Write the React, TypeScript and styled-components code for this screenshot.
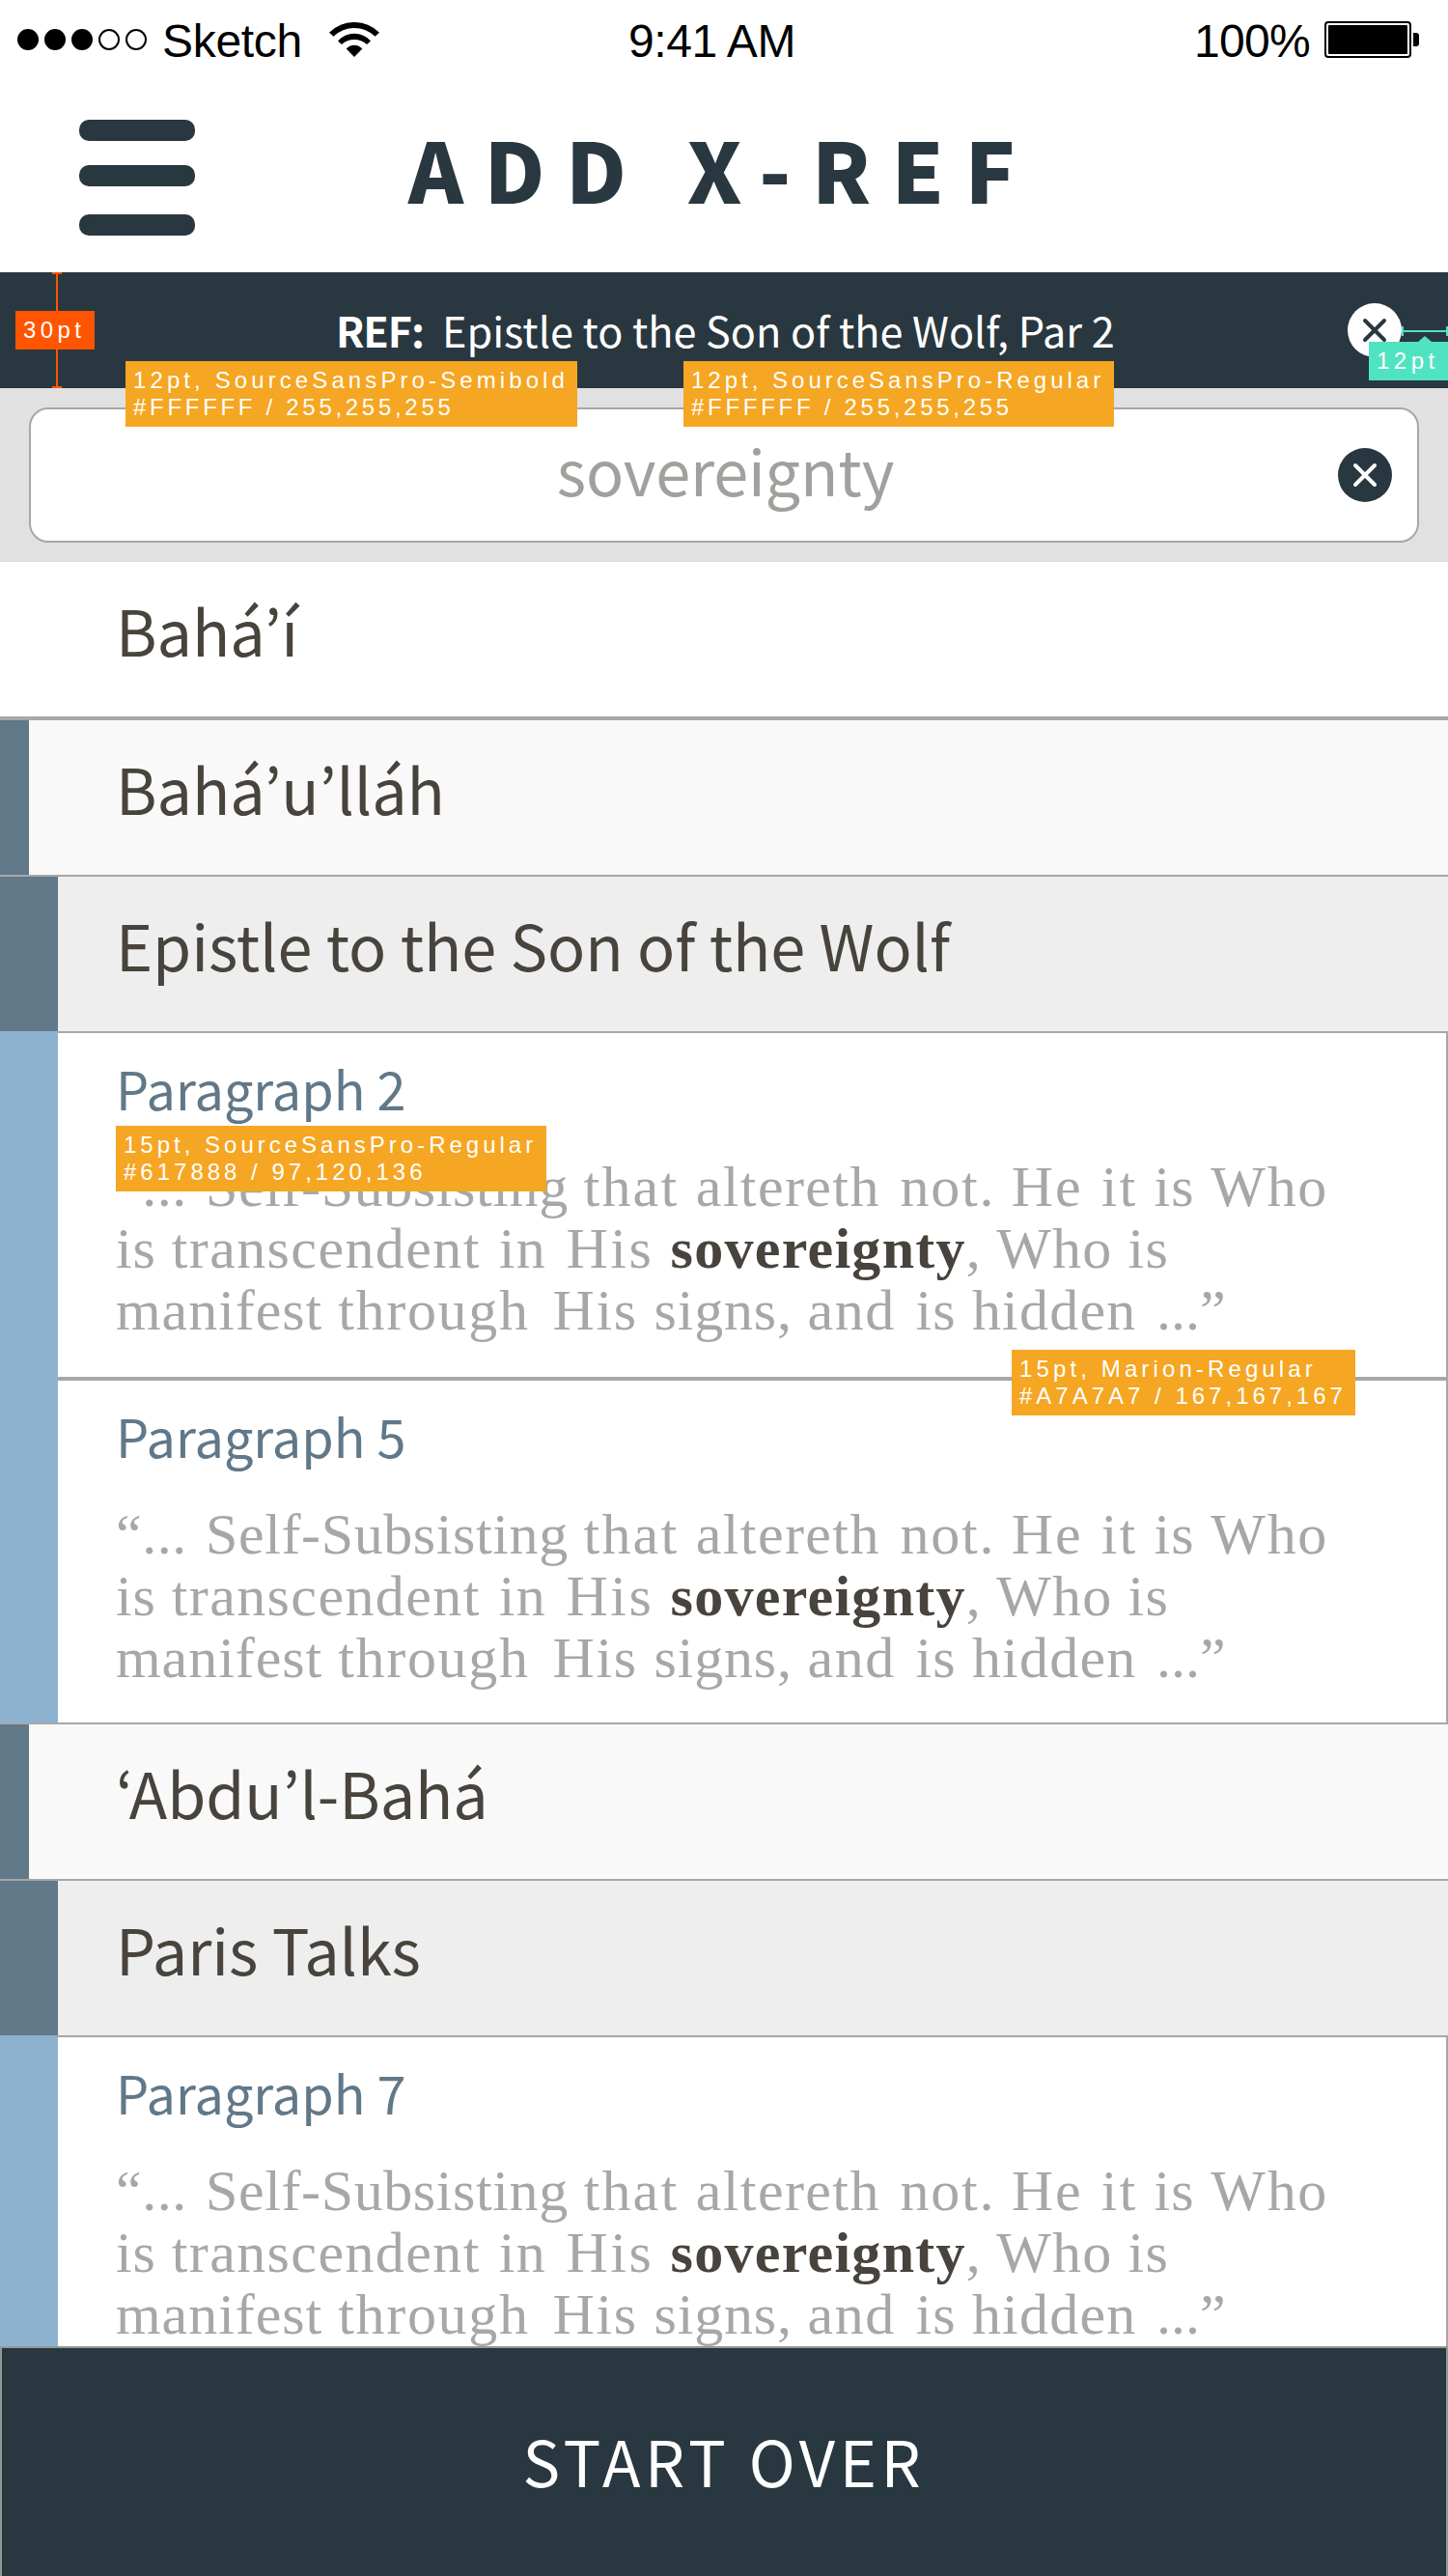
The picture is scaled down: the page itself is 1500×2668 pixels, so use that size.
import React from "react";
import styled, { createGlobalStyle } from "styled-components";

const sans = '"Noto Sans CJK KR", "Open Sans", sans-serif';
const system = '"Liberation Sans", Arial, sans-serif';
const serif = '"Liberation Serif", "Times New Roman", serif';

const ink = "#293740";
const slate = "#617888";
const sky = "#8cb2d0";
const rule = "#a7a7a7";
const charcoal = "#48443d";

const GlobalStyle = createGlobalStyle`
  * { box-sizing: border-box; }
  body { margin: 0; background: #fff; }
`;

const Screen = styled.main`
  position: relative;
  display: flex;
  flex-direction: column;
  width: 1500px;
  height: 2668px;
  overflow: hidden;
  background: #fff;
  font-family: ${sans};
`;

/* Status bar */

const StatusBar = styled.div`
  display: grid;
  grid-template-columns: 633px 1fr auto;
  align-items: center;
  flex: none;
  height: 82px;
  padding: 0 30px 0 18px;
  font: 400 48px/79px ${system};
  color: #000;
`;

const StatusGroup = styled.div`
  display: flex;
  align-items: center;
`;

const SignalDots = styled.div`
  display: flex;
  gap: 6px;
  margin-right: 16px;
`;

const Dot = styled.span<{ $filled: boolean }>`
  width: 22px;
  height: 22px;
  border: 2px solid #000;
  border-radius: 50%;
  background: ${(p) => (p.$filled ? "#000" : "transparent")};
`;

const StatusText = styled.span<{ $track: number }>`
  padding-top: 3px;
  letter-spacing: ${(p) => p.$track}px;
`;

const WifiSvg = styled.svg`
  margin-left: 28px;
`;

const Battery = styled.svg`
  margin-left: 15px;
`;

/* Title bar */

const TitleBar = styled.header`
  display: flex;
  flex: none;
  height: 200px;
  padding-left: 82px;
`;

const MenuButton = styled.button`
  width: 120px;
  height: 120px;
  margin-top: 42px;
  padding: 0;
  border: 0;
  background: none;
`;

const Title = styled.h1`
  margin: 0 0 0 221px;
  font-size: 86.4px;
  font-weight: 900;
  line-height: 183px;
  letter-spacing: 21.5px;
  color: ${ink};
  white-space: pre;
`;

/* Reference bar */

const RefBar = styled.div`
  display: flex;
  align-items: flex-start;
  flex: none;
  height: 120px;
  padding: 0 48px 0 348px;
  background: ${ink};
  color: #fff;
  font-size: 43.2px;
  line-height: 118px;
  white-space: pre;
`;

const RefLabel = styled.strong`
  width: 110px;
  font-weight: 700;
  letter-spacing: -1.1px;
`;

const RoundButton = styled.button`
  flex: none;
  width: 56px;
  height: 56px;
  padding: 0;
  border: 0;
  background: none;
  line-height: 0;
`;

const RefClose = styled(RoundButton)`
  margin: 32px 0 0 auto;
`;

/* Search */

const SearchArea = styled.div`
  flex: none;
  height: 180px;
  padding: 20px 30px;
  background: #e1e1e1;
`;

const SearchField = styled.div`
  display: flex;
  height: 140px;
  padding: 0 26px 0 85px;
  border: 2px solid ${rule};
  border-radius: 20px;
  background: #fff;
`;

const SearchText = styled.span`
  flex: 1;
  text-align: center;
  font-size: 64.8px;
  line-height: 124px;
  letter-spacing: -0.15px;
  color: #a2a09d;
`;

const SearchClear = styled(RoundButton)`
  margin-top: 40px;
`;

/* Result list */

const ResultRow = styled.div<{ $level: 0 | 1 | 2 }>`
  flex: none;
  height: 160px;
  padding-left: ${(p) => 120 - p.$level * 30}px;
  border-left: ${(p) => p.$level * 30}px solid ${slate};
  background: ${(p) => ["#fff", "#f9f9f9", "#eee"][p.$level]};
  font-size: 64.8px;
  line-height: 140px;
  letter-spacing: -0.08px;
  color: ${charcoal};
`;

const Divider = styled.div<{ $thick?: boolean }>`
  flex: none;
  height: ${(p) => (p.$thick ? 4 : 2)}px;
  background: ${rule};
`;

const Passages = styled.div`
  flex: none;
  border-left: 60px solid ${sky};
`;

const Passage = styled.article<{ $height: number }>`
  height: ${(p) => p.$height}px;
  padding: 7px 0 0 60px;
  border-right: 2px solid ${rule};
`;

const PassageTitle = styled.h2`
  margin: 0 0 20px;
  font-size: 54px;
  font-weight: 400;
  line-height: 100px;
  color: ${slate};
`;

const Quote = styled.p`
  margin: 0;
  font: 400 60px/64px ${serif};
  color: ${rule};
`;

const QuoteLine = styled.span`
  display: block;
  white-space: pre;
`;

const Run = styled.span<{ $track: number; $word: number }>`
  letter-spacing: ${(p) => p.$track}px;
  word-spacing: ${(p) => p.$word}px;
`;

const Match = styled(Run)`
  font-weight: 700;
  color: ${charcoal};
`;

/* Footer */

const StartOver = styled.button`
  position: absolute;
  left: 0;
  right: 0;
  bottom: 0;
  display: flex;
  justify-content: center;
  align-items: flex-start;
  height: 238px;
  padding: 0;
  border: 2px solid #929896;
  border-bottom: 0;
  background: ${ink};
  color: #fff;
  font: 400 64.8px/232px ${sans};
  letter-spacing: 4.7px;
`;

/* Spec annotations pinned over the screen */

const Tag = styled.div<{ $x: number; $y: number; $w: number; $h: number; $color: string }>`
  position: absolute;
  left: ${(p) => p.$x}px;
  top: ${(p) => p.$y}px;
  width: ${(p) => p.$w}px;
  height: ${(p) => p.$h}px;
  padding: 6px 0 0 8px;
  background: ${(p) => p.$color};
  color: #fff;
  font: 400 24px/28px ${system};
  white-space: pre;
`;

const TagLine = styled.div<{ $track: number }>`
  letter-spacing: ${(p) => p.$track}px;
`;

const VerticalMeasure = styled.div`
  position: absolute;
  left: 54px;
  top: 282px;
  width: 10px;
  height: 120px;
  border: solid #ff5500;
  border-width: 2px 0;
  background: linear-gradient(#ff5500, #ff5500) center / 2px 100% no-repeat;
`;

const HorizontalMeasure = styled.div`
  position: absolute;
  left: 1452px;
  top: 338px;
  width: 48px;
  height: 10px;
  border: solid #50e3c2;
  border-width: 0 2px;
  background: linear-gradient(#50e3c2, #50e3c2) center / 100% 2px no-repeat;
`;

const Pointer = styled.div`
  position: absolute;
  left: 1469px;
  top: 348px;
  border: solid transparent;
  border-width: 0 7px 6px;
  border-bottom-color: #50e3c2;
`;

const CloseIcon = ({ fill, stroke }: { fill: string; stroke: string }) => (
  <svg width="56" height="56" viewBox="0 0 56 56">
    <circle cx="28" cy="28" r="28" fill={fill} />
    <path d="M18 18L38 38M38 18L18 38" stroke={stroke} strokeWidth="4" strokeLinecap="round" />
  </svg>
);

const WifiIcon = () => (
  <WifiSvg width="52" height="36" viewBox="0 0 52 36">
    <path d="M0 10.7A36.9 36.9 0 0 1 52 10.7L47.5 14.7A30.9 30.9 0 0 0 4.5 14.7Z" />
    <path d="M9 19.4A22.8 22.8 0 0 1 43 19.4L39 23A19.4 19.4 0 0 0 13 23Z" />
    <path d="M17.7 27.5A11 11 0 0 1 34.3 27.5L26 36Z" />
  </WifiSvg>
);

/* Each run: text, letter spacing, extra word spacing. */
type TextRun = [string, number, number];

const matchWord = "sovereignty";

const quoteLines: TextRun[][] = [
  [
    ["“... ", 0.5, 3.9],
    ["Self-Subsisting ", 0.6, 0.2],
    ["that ", 2.2, 0.2],
    ["altereth ", 1.4, 4.4],
    ["not. ", 1.7, 0],
    ["He ", 2, 2],
    ["it ", 2.1, 0],
    ["is ", 1.3, 0],
    ["Who", 1.7, 0],
  ],
  [
    ["is ", 0.9, 0],
    ["transcendent ", 1.4, 2.6],
    ["in ", 1.4, 4],
    ["His ", 2.4, 0],
    [matchWord, 1.28, 0],
    [", Who is", 1.2, 0],
  ],
  [
    ["manifest ", 0.95, 0],
    ["through ", 1.7, 7],
    ["His ", 1.7, 0],
    ["signs, ", 0.8, 0],
    ["and ", 1.5, 4.4],
    ["is ", 1.1, 0],
    ["hidden ", 1.2, 4.3],
    ["...”", 0, 0],
  ],
];

const PassageItem = ({ number, height }: { number: number; height: number }) => (
  <Passage $height={height}>
    <PassageTitle>Paragraph {number}</PassageTitle>
    <Quote>
      {quoteLines.map((line, i) => (
        <QuoteLine key={i}>
          {line.map(([text, track, word]) => {
            const Part = text === matchWord ? Match : Run;
            return (
              <Part key={text} $track={track} $word={word}>
                {text}
              </Part>
            );
          })}
        </QuoteLine>
      ))}
    </Quote>
  </Passage>
);

const tags: { x: number; y: number; w: number; lines: [string, number][] }[] = [
  { x: 130, y: 374, w: 468, lines: [["12pt, SourceSansPro-Semibold", 4.1], ["#FFFFFF / 255,255,255", 3.7]] },
  { x: 708, y: 374, w: 446, lines: [["12pt, SourceSansPro-Regular", 4], ["#FFFFFF / 255,255,255", 3.72]] },
  { x: 120, y: 1166, w: 446, lines: [["15pt, SourceSansPro-Regular", 4], ["#617888 / 97,120,136", 4]] },
  { x: 1048, y: 1398, w: 356, lines: [["15pt, Marion-Regular", 4.12], ["#A7A7A7 / 167,167,167", 4]] },
];

export default function App() {
  return (
    <Screen>
      <GlobalStyle />
      <StatusBar>
        <StatusGroup>
          <SignalDots>
            {[true, true, true, false, false].map((filled, i) => (
              <Dot key={i} $filled={filled} />
            ))}
          </SignalDots>
          <StatusText $track={-0.3}>Sketch</StatusText>
          <WifiIcon />
        </StatusGroup>
        <StatusText $track={-0.45}>9:41 AM</StatusText>
        <StatusGroup>
          <StatusText $track={-0.7}>100%</StatusText>
          <Battery width="98" height="38" viewBox="0 0 98 38">
            <rect x="1" y="1" width="88" height="36" rx="3" fill="none" stroke="#000" strokeWidth="2" />
            <rect x="4" y="4" width="82" height="30" rx="1" />
            <path d="M92 12h3a3 3 0 0 1 3 3v8a3 3 0 0 1-3 3h-3z" />
          </Battery>
        </StatusGroup>
      </StatusBar>

      <TitleBar>
        <MenuButton aria-label="Menu">
          <svg width="120" height="120" viewBox="0 0 120 120" fill={ink}>
            <rect y="0" width="120" height="22" rx="10" />
            <rect y="47" width="120" height="22" rx="10" />
            <rect y="98" width="120" height="22" rx="10" />
          </svg>
        </MenuButton>
        <Title>ADD X-REF</Title>
      </TitleBar>

      <RefBar>
        <RefLabel>REF:</RefLabel>
        <span>Epistle to the Son of the Wolf, Par 2</span>
        <RefClose aria-label="Remove reference">
          <CloseIcon fill="#fff" stroke={ink} />
        </RefClose>
      </RefBar>

      <SearchArea>
        <SearchField>
          <SearchText>sovereignty</SearchText>
          <SearchClear aria-label="Clear search">
            <CloseIcon fill={ink} stroke="#fff" />
          </SearchClear>
        </SearchField>
      </SearchArea>

      <ResultRow $level={0}>Bahá’í</ResultRow>
      <Divider $thick />
      <ResultRow $level={1}>Bahá’u’lláh</ResultRow>
      <Divider />
      <ResultRow $level={2}>Epistle to the Son of the Wolf</ResultRow>
      <Passages>
        <Divider />
        <PassageItem number={2} height={356} />
        <Divider $thick />
        <PassageItem number={5} height={354} />
      </Passages>
      <Divider />
      <ResultRow $level={1}>‘Abdu’l-Bahá</ResultRow>
      <Divider />
      <ResultRow $level={2}>Paris Talks</ResultRow>
      <Passages>
        <Divider />
        <PassageItem number={7} height={356} />
      </Passages>

      <StartOver>START OVER</StartOver>

      <VerticalMeasure />
      <Tag $x={16} $y={322} $w={82} $h={40} $color="#ff5500">
        <TagLine $track={4.4}>30pt</TagLine>
      </Tag>
      <HorizontalMeasure />
      <Pointer />
      <Tag $x={1418} $y={354} $w={82} $h={40} $color="#50e3c2">
        <TagLine $track={4.5}>12pt</TagLine>
      </Tag>
      {tags.map((tag) => (
        <Tag key={`${tag.x}-${tag.y}`} $x={tag.x} $y={tag.y} $w={tag.w} $h={68} $color="#f5a623">
          {tag.lines.map(([text, track]) => (
            <TagLine key={text} $track={track}>{text}</TagLine>
          ))}
        </Tag>
      ))}
    </Screen>
  );
}
